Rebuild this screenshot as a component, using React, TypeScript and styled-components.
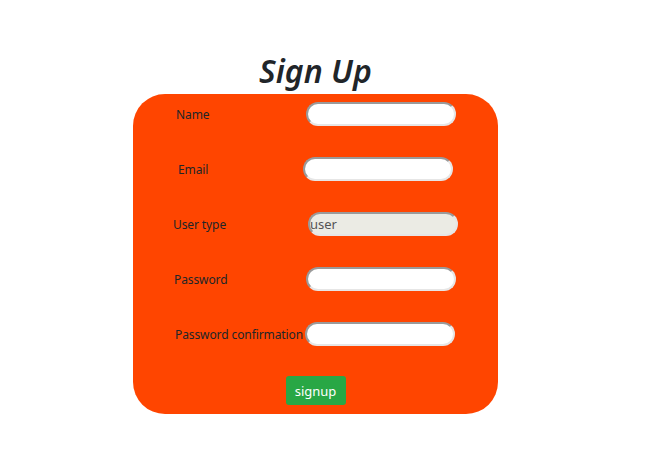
import React from "react";
import styled, { createGlobalStyle } from "styled-components";

const GlobalStyle = createGlobalStyle`
  body {
    margin: 0;
    background: #ffffff;
    font-family: "Segoe UI", "Noto Sans", "Open Sans", sans-serif;
  }
`;

const Page = styled.div`
  width: 646px;
  height: 476px;
  display: flex;
  flex-direction: column;
  align-items: center;
  padding-right: 15px;
  box-sizing: border-box;
`;

const Title = styled.h1`
  margin: 50px 0 2px;
  font-size: 32px;
  line-height: 42px;
  font-style: italic;
  font-weight: 600;
  color: #212529;
`;

const Card = styled.form`
  width: 365px;
  height: 320px;
  box-sizing: border-box;
  background: #ff4500;
  border-radius: 32px;
  padding: 8px 0 0 40px;
  display: flex;
  flex-direction: column;
`;

const Row = styled.div<{ $shift: number; $labelShift: number }>`
  display: flex;
  align-items: center;
  height: 24px;
  margin-bottom: 31px;
  padding-left: ${(p) => p.$labelShift}px;

  & > input {
    margin-left: ${(p) => p.$shift}px;
  }
`;

const Label = styled.label`
  width: 132px;
  flex-shrink: 0;
  font-size: 12px;
  letter-spacing: -0.1px;
  color: #212529;
  white-space: nowrap;
`;

const Input = styled.input`
  width: 150px;
  height: 24px;
  box-sizing: border-box;
  border: 2px solid #e6e6e6;
  border-top-color: #9a9a9a;
  border-left-color: #9a9a9a;
  border-radius: 12px;
  background: #ffffff;
  padding: 0;
  outline: none;
  font-family: inherit;
  font-size: 13px;
  color: #545454;

  &:disabled {
    background: #ebebe4;
  }
`;

const ButtonRow = styled.div`
  display: flex;
  justify-content: center;
  padding-right: 40px;
  margin-top: -1px;
`;

const SignupButton = styled.button`
  width: 60px;
  height: 29px;
  border: none;
  border-radius: 3px;
  background: #28a745;
  color: #ffffff;
  font-family: inherit;
  font-size: 13px;
  padding: 0;
  cursor: pointer;
`;

const fields = [
  { label: "Name", shift: -2, labelShift: 3 },
  { label: "Email", shift: -7, labelShift: 5 },
  { label: "User type", shift: 3, labelShift: 0, value: "user", disabled: true },
  { label: "Password", shift: 0, labelShift: 1 },
  { label: "Password confirmation", shift: -2, labelShift: 2 },
];

const App: React.FC = () => {
  return (
    <>
      <GlobalStyle />
      <Page>
        <Title>Sign Up</Title>
        <Card onSubmit={(e) => e.preventDefault()}>
          {fields.map((f) => (
            <Row key={f.label} $shift={f.shift} $labelShift={f.labelShift}>
              <Label>{f.label}</Label>
              <Input
                type={f.label.startsWith("Password") ? "password" : "text"}
                defaultValue={f.value}
                disabled={f.disabled}
              />
            </Row>
          ))}
          <ButtonRow>
            <SignupButton type="submit">signup</SignupButton>
          </ButtonRow>
        </Card>
      </Page>
    </>
  );
};

export default App;
